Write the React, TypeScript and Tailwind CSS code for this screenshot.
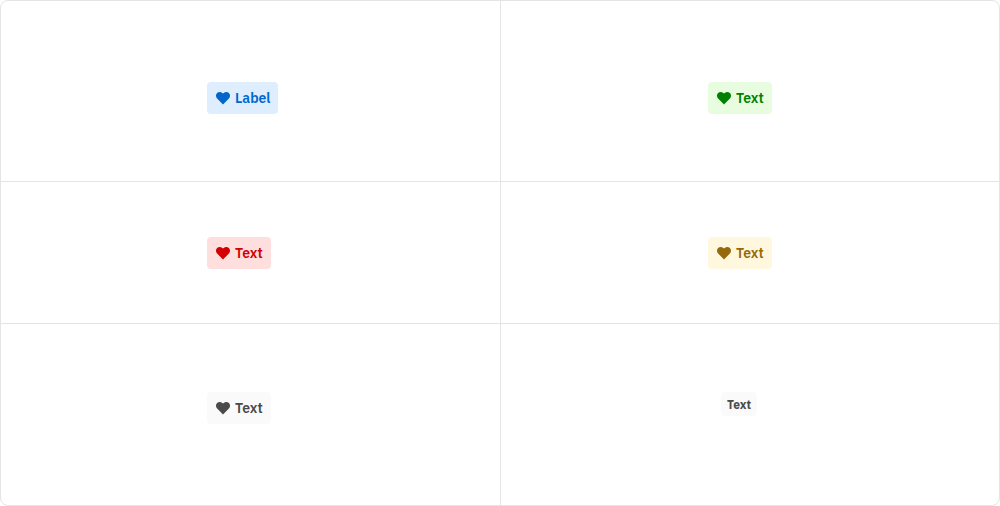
type Tone = 'info' | 'success' | 'critical' | 'warning' | 'neutral'

const tones: Record<Tone, string> = {
  info: 'bg-[#deeeff] text-[#0066cc]',
  success: 'bg-[#e8fde0] text-[#008000]',
  critical: 'bg-[#ffdede] text-[#d20000]',
  warning: 'bg-[#fff8de] text-[#966a0a]',
  neutral: 'bg-[#fafafa] text-[#4b4b4b]',
}

function Heart() {
  return (
    <svg viewBox="0 0 16 16" fill="currentColor" aria-hidden="true" className="size-4 shrink-0">
      <path d="M8 14.4 2.1 8.5C.6 6.9.6 4.5 2.1 3 3.5 1.6 5.8 1.5 7.3 2.9L8 3.6l.7-.7c1.5-1.4 3.8-1.3 5.2.1 1.5 1.5 1.5 3.9 0 5.5Z" />
    </svg>
  )
}

function Badge({ tone, label, small = false }: { tone: Tone; label: string; small?: boolean }) {
  const size = small ? 'h-6 px-[6px] pt-px text-xs font-bold' : 'h-8 min-w-16 gap-1 px-2 text-sm font-semibold'
  return (
    <span className={`inline-flex shrink-0 items-center rounded whitespace-nowrap ${size} ${tones[tone]}`}>
      {!small && <Heart />}
      <span>{label}</span>
    </span>
  )
}

const cells: { tone: Tone; label: string; small?: boolean; className: string }[] = [
  { tone: 'info', label: 'Label', className: 'border-b pr-[23px] pt-[81px] pb-[67px]' },
  { tone: 'success', label: 'Text', className: 'border-b border-l pr-5 pt-[81px] pb-[67px]' },
  { tone: 'critical', label: 'Text', className: 'border-b pr-[23px] pt-[55px] pb-[54px]' },
  { tone: 'warning', label: 'Text', className: 'border-b border-l pr-5 pt-[55px] pb-[54px]' },
  { tone: 'neutral', label: 'Text', className: 'pr-[23px] pt-[68px] pb-[81px]' },
  { tone: 'neutral', label: 'Text', small: true, className: 'border-l pr-[22px] pt-[68px] pb-[81px]' },
]

export default function App() {
  return (
    <main className="grid grid-cols-2 overflow-hidden rounded-lg border border-[#e4e4e4] bg-white font-['IBM_Plex_Sans','Roboto',sans-serif]">
      {cells.map((cell, i) => (
        <div key={i} className={`flex items-start justify-center border-[#e4e4e4] ${cell.className}`}>
          <div className={`flex w-16 ${cell.small ? 'justify-center' : 'justify-start'}`}>
            <Badge tone={cell.tone} label={cell.label} small={cell.small} />
          </div>
        </div>
      ))}
    </main>
  )
}
